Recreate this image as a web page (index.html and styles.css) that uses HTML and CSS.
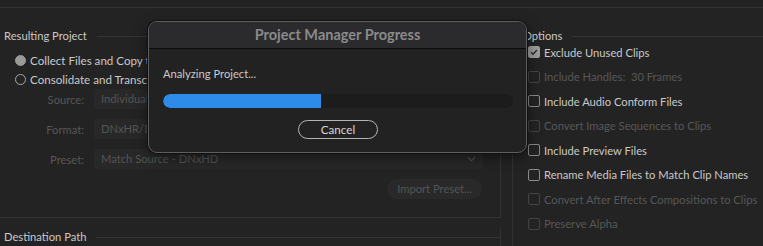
FILE: index.html
```html
<!DOCTYPE html>
<html lang="en">
<head>
    <meta charset="UTF-8">
    <title>Project Manager</title>
    <link rel="stylesheet" href="styles.css">
</head>
<body>

<div class="top-rule"></div>

<div class="panels">
    <div class="left-col">
        <div class="group result-group">
            <div class="group-title"><span>Resulting Project</span></div>

            <div class="radio-list">
                <div class="radio-row"><span class="radio radio-on"></span>Collect Files and Copy to New Location</div>
                <div class="radio-row"><span class="radio"></span>Consolidate and Transcode</div>
            </div>

            <div class="field-row">
                <span class="field-label">Source:</span>
                <span class="field">Individual Sources</span>
            </div>
            <div class="field-row">
                <span class="field-label">Format:</span>
                <span class="field">DNxHR/DNxHD MXF OP1a</span>
            </div>
            <div class="field-row">
                <span class="field-label">Preset:</span>
                <span class="field">Match Source - DNxHD
                    <svg class="chevron" viewBox="0 0 10 6"><path d="M1 1l4 4 4-4"/></svg>
                </span>
            </div>
            <div class="button-row">
                <span class="pill-button">Import Preset...</span>
            </div>
        </div>

        <div class="group dest-group">
            <div class="group-title"><span>Destination Path</span></div>
        </div>
    </div>

    <div class="right-col">
        <div class="group options-group">
            <div class="group-title"><span>Options</span></div>
            <ul class="option-list">
                <li><span class="check check-on"><svg viewBox="0 0 12 12"><path d="M2.5 6.2l2.4 2.4 4.6-5"/></svg></span>Exclude Unused Clips</li>
                <li class="disabled"><span class="check"></span>Include Handles:&nbsp; 30 Frames</li>
                <li><span class="check"></span>Include Audio Conform Files</li>
                <li class="disabled"><span class="check"></span>Convert Image Sequences to Clips</li>
                <li><span class="check"></span>Include Preview Files</li>
                <li><span class="check"></span>Rename Media Files to Match Clip Names</li>
                <li class="disabled"><span class="check"></span>Convert After Effects Compositions to Clips</li>
                <li class="disabled"><span class="check"></span>Preserve Alpha</li>
            </ul>
        </div>
    </div>
</div>

<div class="dialog">
    <div class="dialog-title">Project Manager Progress</div>
    <div class="dialog-body">
        <p class="status">Analyzing Project...</p>
        <div class="progress"><div class="progress-fill" style="width: 45%"></div></div>
        <div class="dialog-actions">
            <button class="cancel-button">Cancel</button>
        </div>
    </div>
</div>

</body>
</html>
```

FILE: styles.css
```css
body {
    margin: 0;
    background: #232323;
    color: #c9c9c9;
    font-family: Lato, "Noto Sans", sans-serif;
    font-size: 11.2px;
    white-space: nowrap;
    overflow: hidden;
    height: 246px;
}
.top-rule {
    height: 7px;
    border-bottom: 1px solid #333333;
}
.panels {
    display: flex;
    margin-top: 20px;
}
.left-col {
    width: 501px;
    flex: none;
}
.right-col {
    margin-left: 11px;
    flex: 1;
}
.group-title {
    display: flex;
    align-items: center;
    height: 16px;
    line-height: 16px;
}
.group-title::after {
    content: "";
    flex: 1;
    border-top: 1px solid #333333;
    margin-left: 10px;
}
.result-group .group-title,
.dest-group .group-title {
    padding-left: 4px;
}
.result-group {
    border-right: 1px solid #333333;
    border-bottom: 1px solid #333333;
    padding-bottom: 18px;
}
.dest-group {
    margin-top: 11px;
    border-right: 1px solid #333333;
    height: 18px;
}
.radio-list {
    margin-top: 7px;
}
.radio-row {
    display: flex;
    align-items: center;
    height: 19px;
    padding-left: 15px;
    font-size: 11.6px;
}
.radio {
    width: 9px;
    height: 9px;
    border: 1.5px solid #a8a8a8;
    border-radius: 50%;
    margin-right: 4px;
}
.radio-on {
    background: #9a9a9a;
    border-color: #9a9a9a;
}
.field-row {
    display: flex;
    align-items: center;
    margin-bottom: 10px;
}
.field-label {
    width: 84px;
    text-align: right;
    padding-right: 10px;
    color: #575757;
}
.field {
    position: relative;
    width: 382px;
    height: 20px;
    line-height: 20px;
    padding-left: 7px;
    background: #282828;
    border-radius: 2px;
    color: #555555;
}
.chevron {
    position: absolute;
    right: 7px;
    top: 7px;
    width: 9px;
    height: 6px;
    fill: none;
    stroke: #555555;
    stroke-width: 1.2;
}
.button-row {
    display: flex;
    justify-content: flex-end;
    padding-right: 18px;
}
.pill-button {
    height: 20px;
    line-height: 20px;
    padding: 0 10px;
    background: #292929;
    border-radius: 10px;
    color: #555555;
}
.options-group {
    border-left: 1px solid #333333;
    height: 218px;
}
.options-group .group-title {
    padding-left: 10px;
}
.option-list {
    list-style: none;
    margin: -4px 0 0;
    padding: 0 0 0 15px;
}
.option-list li {
    display: flex;
    align-items: center;
    height: 24.5px;
}
.option-list li.disabled {
    color: #575757;
}
.check {
    width: 10px;
    height: 10px;
    border: 1.5px solid #8a8a8a;
    border-radius: 2px;
    margin-right: 4px;
    flex: none;
}
.disabled .check {
    border-color: #444444;
}
.check-on {
    background: #9c9c9c;
    border-color: #9c9c9c;
}
.check-on svg {
    display: block;
    width: 10px;
    height: 10px;
    fill: none;
    stroke: #2a2a2a;
    stroke-width: 1.6;
}
.dialog {
    position: absolute;
    left: 148px;
    top: 21px;
    width: 377px;
    height: 130px;
    border: 1px solid #5e5e5e;
    border-radius: 9px;
    background: #222222;
    box-shadow: 0 0 0 1px #111111, 0 4px 14px rgba(0, 0, 0, 0.5);
    overflow: hidden;
}
.dialog-title {
    height: 26px;
    line-height: 26px;
    text-align: center;
    background: #2b2b2e;
    border-bottom: 1px solid #0c0c0c;
    color: #8a8a8a;
    font-weight: bold;
    font-size: 14.5px;
}
.dialog-body {
    padding: 0 13px 0 14px;
}
.status {
    margin: 17px 0 0;
    line-height: 16px;
}
.progress {
    margin-top: 12px;
    height: 14px;
    border-radius: 7px;
    background: #1c1c1c;
    overflow: hidden;
}
.progress-fill {
    height: 100%;
    background: #2d8bea;
    border-radius: 7px 0 0 7px;
}
.dialog-actions {
    display: flex;
    justify-content: center;
    margin-top: 12px;
}
.cancel-button {
    width: 80px;
    height: 19px;
    padding: 0;
    background: transparent;
    border: 1px solid #b5b5b5;
    border-radius: 10px;
    color: #d8d8d8;
    font-family: Lato, "Noto Sans", sans-serif;
    font-size: 11.6px;
    line-height: 16px;
}
```
